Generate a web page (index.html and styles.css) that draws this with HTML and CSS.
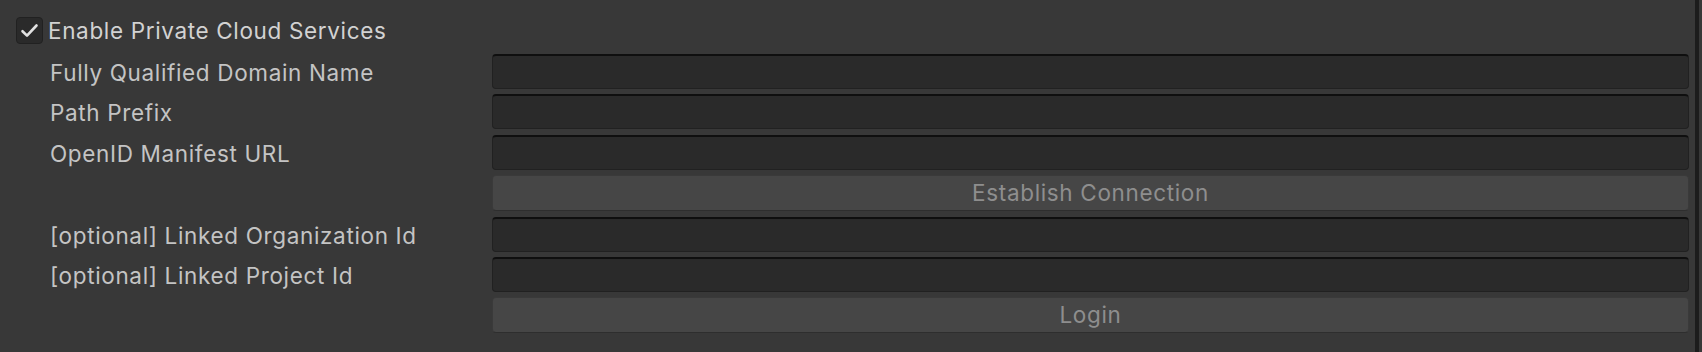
FILE: index.html
```html
<!DOCTYPE html>
<html lang="en">

<head>
    <meta charset="UTF-8">
    <meta name="viewport" content="width=device-width, initial-scale=1.0">
    <title>Private Cloud Services</title>
    <link rel="stylesheet" href="styles.css">
</head>

<body>
    <div class="inspector">
        <div class="content">
            <label class="toggle">
                <span class="checkbox">
                    <svg viewBox="0 0 27 27" width="27" height="27">
                        <path d="M6.5 14.2 L11 18.6 L20.5 8.5" fill="none" stroke="#e2e2e2" stroke-width="2.6"
                            stroke-linecap="round" stroke-linejoin="round" />
                    </svg>
                </span>
                <span class="toggle-text">Enable Private Cloud Services</span>
            </label>

            <div class="rows">
                <div class="row">
                    <span class="label">Fully Qualified Domain Name</span>
                    <div class="field"></div>
                </div>
                <div class="row">
                    <span class="label">Path Prefix</span>
                    <div class="field"></div>
                </div>
                <div class="row">
                    <span class="label">OpenID Manifest URL</span>
                    <div class="field"></div>
                </div>
                <div class="row row-button">
                    <span class="label"></span>
                    <button class="btn">Establish Connection</button>
                </div>
                <div class="row">
                    <span class="label">[optional] Linked Organization Id</span>
                    <div class="field"></div>
                </div>
                <div class="row">
                    <span class="label">[optional] Linked Project Id</span>
                    <div class="field"></div>
                </div>
                <div class="row row-button">
                    <span class="label"></span>
                    <button class="btn">Login</button>
                </div>
            </div>
        </div>
        <div class="edge"></div>
    </div>
</body>

</html>
```

FILE: styles.css
```css
body {
    margin: 0;
    background: #383838;
    font-family: Inter, "Noto Sans", sans-serif;
    font-size: 22.5px;
    letter-spacing: 0.65px;
    color: #c4c4c4;
    overflow: hidden;
}

.inspector {
    display: flex;
    height: 352px;
}

.content {
    flex: 1;
    padding: 17px 6px 0 16px;
}

.edge {
    width: 4px;
    background: #1c1c1c;
    margin-right: 3px;
}

.toggle {
    display: flex;
    align-items: center;
    gap: 5px;
    height: 27px;
    line-height: 27px;
}

.checkbox {
    width: 27px;
    height: 27px;
    box-sizing: border-box;
    background: #2a2a2a;
    border: 1px solid #212121;
    border-radius: 4px;
    display: flex;
}

.checkbox svg {
    margin: -1px;
}

.toggle-text {
    color: #d2d2d2;
}

.rows {
    margin-top: 10px;
    display: flex;
    flex-direction: column;
    gap: 5.4px;
}

.row {
    display: grid;
    grid-template-columns: 476px 1fr;
    height: 35px;
}

.row-button {
    height: 36px;
}

.label {
    padding-left: 34px;
    padding-top: 1px;
    line-height: 36px;
    white-space: nowrap;
}

.field {
    box-sizing: border-box;
    height: 35px;
    background: #2a2a2a;
    border: 1px solid #212121;
    border-top: 2px solid #0f0f0f;
    border-radius: 4px;
}

.btn {
    box-sizing: border-box;
    height: 36px;
    margin: 0;
    padding: 0;
    background: #464646;
    border: 1px solid #3a3a3a;
    border-bottom-color: #2e2e2e;
    border-radius: 4px;
    font-family: inherit;
    font-size: 22.5px;
    letter-spacing: 0.65px;
    line-height: 34px;
    color: #8e8e8e;
    text-align: center;
}
```
